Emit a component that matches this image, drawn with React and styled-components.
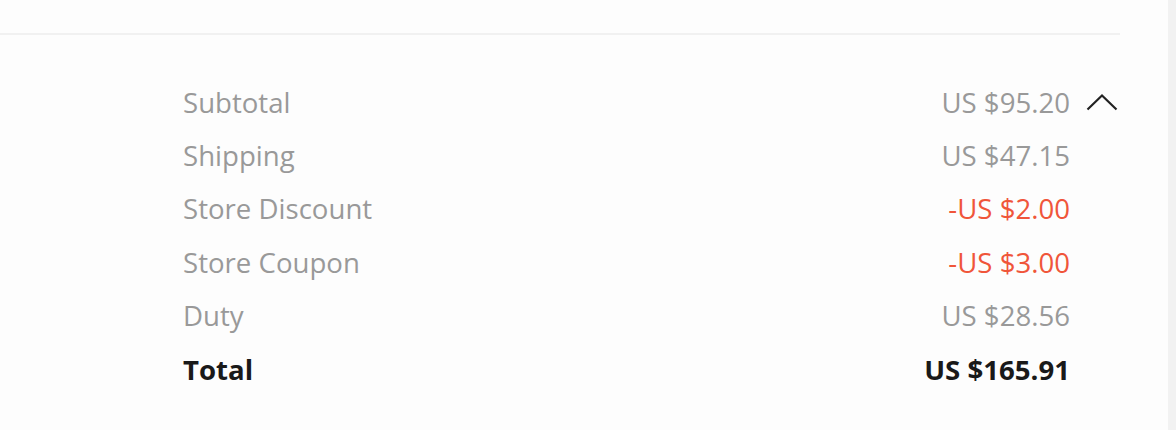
import React from 'react'
import styled, { createGlobalStyle } from 'styled-components'

const GlobalStyle = createGlobalStyle`
    html, body {
        margin: 0;
        padding: 0;
        background: #f2f2f2;
    }
    body {
        font-family: "Open Sans", "Liberation Sans", sans-serif;
    }
`

const Page = styled.div`
    display: flex;
    width: 1176px;
    height: 430px;
    background: #f2f2f2;
`

const Panel = styled.div`
    width: 1168px;
    height: 430px;
    background: #fdfdfd;
    display: flex;
    flex-direction: column;
`

const TopArea = styled.div`
    height: 33px;
`

const Divider = styled.div`
    width: 1120px;
    height: 2px;
    background: #f1f1f1;
`

const Summary = styled.div`
    display: grid;
    grid-template-columns: 1fr auto 48px;
    grid-auto-rows: 53.4px;
    align-items: center;
    padding: 40px 50px 0 183px;
`

const Label = styled.div`
    font-size: 27.6px;
    color: ${(p) => (p.$strong ? '#191919' : '#999999')};
    font-weight: ${(p) => (p.$strong ? 700 : 400)};
`

const Value = styled.div`
    font-size: 27.6px;
    text-align: right;
    color: ${(p) => (p.$strong ? '#191919' : p.$negative ? '#f0553a' : '#999999')};
    font-weight: ${(p) => (p.$strong ? 700 : 400)};
`

const Toggle = styled.div`
    display: flex;
    justify-content: flex-end;
    align-items: center;
    height: 100%;
`

const Chevron = () => (
    <svg width="32" height="18" viewBox="0 0 32 18" fill="none">
        <path d="M1.5 16.5 L16 2.5 L30.5 16.5" stroke="#222" strokeWidth="2.2" />
    </svg>
)

const rows = [
    { label: 'Subtotal', value: 'US $95.20', toggle: true },
    { label: 'Shipping', value: 'US $47.15' },
    { label: 'Store Discount', value: '-US $2.00', negative: true },
    { label: 'Store Coupon', value: '-US $3.00', negative: true },
    { label: 'Duty', value: 'US $28.56' },
    { label: 'Total', value: 'US $165.91', strong: true },
]

export default function App() {
    return (
        <Page>
            <GlobalStyle />
            <Panel>
                <TopArea />
                <Divider />
                <Summary>
                    {rows.map((r) => (
                        <React.Fragment key={r.label}>
                            <Label $strong={r.strong}>{r.label}</Label>
                            <Value $strong={r.strong} $negative={r.negative}>
                                {r.value}
                            </Value>
                            <Toggle>{r.toggle && <Chevron />}</Toggle>
                        </React.Fragment>
                    ))}
                </Summary>
            </Panel>
        </Page>
    )
}
